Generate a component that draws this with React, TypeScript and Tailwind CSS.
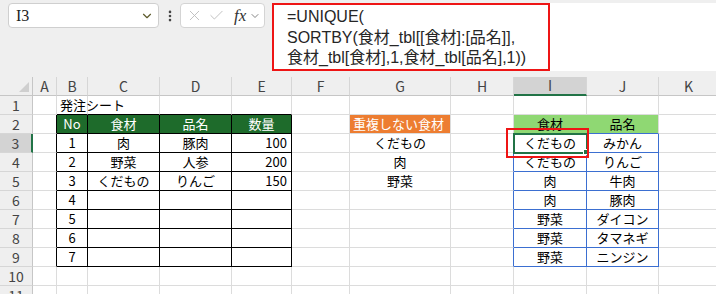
import React from 'react';
import { ChevronDown, EllipsisVertical, X, Check } from 'lucide-react';

type Cell = { t: string; a?: 'l' | 'c' | 'r'; fill?: 'dg' | 'or' | 'lg' };

const cols = [
  { k: '', w: 'w-[33px]' },
  { k: 'A', w: 'w-[24px]' },
  { k: 'B', w: 'w-[31px]' },
  { k: 'C', w: 'w-[72px]' },
  { k: 'D', w: 'w-[72px]' },
  { k: 'E', w: 'w-[60px]' },
  { k: 'F', w: 'w-[58px]' },
  { k: 'G', w: 'w-[101px]' },
  { k: 'H', w: 'w-[63px]' },
  { k: 'I', w: 'w-[73px]' },
  { k: 'J', w: 'w-[72px]' },
  { k: 'K', w: 'w-[60px]' },
];

const cells: Record<string, Cell> = {
  '1-2': { t: '発注シート', a: 'l' },
  '2-2': { t: 'No', fill: 'dg' },
  '2-3': { t: '食材', fill: 'dg' },
  '2-4': { t: '品名', fill: 'dg' },
  '2-5': { t: '数量', fill: 'dg' },
  '2-7': { t: '重複しない食材', a: 'l', fill: 'or' },
  '2-9': { t: '食材', fill: 'lg' },
  '2-10': { t: '品名', fill: 'lg' },
};

// 発注シート
const order = [
  ['肉', '豚肉', '100'],
  ['野菜', '人参', '200'],
  ['くだもの', 'りんご', '150'],
];
for (let i = 0; i < 7; i++) {
  const r = i + 3;
  cells[`${r}-2`] = { t: String(i + 1) };
  if (order[i]) {
    cells[`${r}-3`] = { t: order[i][0] };
    cells[`${r}-4`] = { t: order[i][1] };
    cells[`${r}-5`] = { t: order[i][2], a: 'r' };
  }
}
['くだもの', '肉', '野菜'].forEach((t, i) => (cells[`${i + 3}-7`] = { t }));

// スピル範囲
const spill = [
  ['くだもの', 'みかん'],
  ['くだもの', 'りんご'],
  ['肉', '牛肉'],
  ['肉', '豚肉'],
  ['野菜', 'ダイコン'],
  ['野菜', 'タマネギ'],
  ['野菜', 'ニンジン'],
];
spill.forEach(([a, b], i) => {
  cells[`${i + 3}-9`] = { t: a };
  cells[`${i + 3}-10`] = { t: b };
});

const rightCls = (r: number, c: number) => {
  if (c === 0) return r === 3 ? 'border-r-2 border-r-[#217346]' : 'border-r border-r-[#c6c6c6]';
  if (r === 0) return 'border-r border-r-[#d6d6d6]';
  if (r >= 2 && r <= 9 && c >= 1 && c <= 5) return 'border-r border-r-black';
  if (r >= 3 && r <= 9 && c >= 8 && c <= 10) return 'border-r border-r-[#3b6fd1]';
  if (r === 2 && c === 9) return 'border-r border-r-[#8fd873]';
  return 'border-r border-r-[#dcdcdc]';
};

const bottomCls = (r: number, c: number) => {
  if (r === 0) return c === 9 ? 'border-b-2 border-b-[#217346]' : 'border-b border-b-[#c6c6c6]';
  if (c === 0) return 'border-b border-b-[#d6d6d6]';
  if (r >= 1 && r <= 9 && c >= 2 && c <= 5) return 'border-b border-b-black';
  if (r >= 2 && r <= 9 && c >= 9 && c <= 10) return 'border-b border-b-[#3b6fd1]';
  return 'border-b border-b-[#dcdcdc]';
};

const fillCls = (f?: Cell['fill']) => {
  if (f === 'dg') return 'bg-[#1e6b2b] text-white';
  if (f === 'or') return 'bg-[#ed7d31] text-white';
  if (f === 'lg') return 'bg-[#8fd873] text-black';
  return 'text-black';
};

const alignCls = (a?: Cell['a']) => {
  if (a === 'l') return 'justify-start pl-[3px]';
  if (a === 'r') return 'justify-end pr-[4px]';
  return 'justify-center';
};

const FormulaBar = () => (
  <div className="h-[77px] flex items-start pt-[3px] pl-[8px]">
    <div className="w-[151px] h-[25px] bg-white border border-[#cfcfcf] rounded-[4px] flex items-center justify-between pl-[7px] pr-[4px]">
      <span className="text-[16px] text-[#222] font-['Liberation_Serif',serif]">I3</span>
      <ChevronDown size={14} strokeWidth={2} className="text-[#5e5b2c]" />
    </div>
    <div className="w-[21px] h-[25px] flex items-center justify-center">
      <EllipsisVertical size={14} strokeWidth={2.5} className="text-[#444]" />
    </div>
    <div className="w-[85px] h-[25px] bg-white border border-[#d4d4d4] rounded-[4px] flex items-center pl-[5px] gap-[3px]">
      <X size={17} strokeWidth={1.3} className="text-[#bdbdbd]" />
      <Check size={17} strokeWidth={1.3} className="text-[#bdbdbd] ml-[2px]" />
      <span className="ml-[6px] text-[17px] italic text-[#333] font-['Liberation_Serif',serif] leading-none">fx</span>
      <ChevronDown size={12} strokeWidth={1.6} className="text-[#666]" />
    </div>
    <div className="ml-[7px] flex-1 h-[68px] bg-white">
      <div className="w-[278px] h-[68px] border-2 border-[#ee1515] pl-[13px] pt-[2px] text-[16px] leading-[20.5px] text-[#262626] font-['Liberation_Sans','Noto_Sans_CJK_JP',sans-serif] whitespace-nowrap">
        <div>=UNIQUE(</div>
        <div>SORTBY(食材_tbl[[食材]:[品名]],</div>
        <div>食材_tbl[食材],1,食材_tbl[品名],1))</div>
      </div>
    </div>
  </div>
);

const Corner = () => (
  <svg width="32" height="18" className="block">
    <polygon points="29,5 29,15 19,15" fill="#cfcfcf" />
  </svg>
);

export default function App() {
  const rows = Array.from({ length: 12 }, (_, r) => r);
  return (
    <div className="w-[716px] h-[294px] overflow-hidden bg-[#efefef] font-['Noto_Sans_CJK_JP',sans-serif]">
      <FormulaBar />
      <div className="relative bg-white">
        {rows.map((r) => (
          <div key={r} className="flex h-[19px]">
            {cols.map((col, c) => {
              if (r === 0) {
                return (
                  <div
                    key={c}
                    className={`${col.w} shrink-0 h-[19px] flex items-center justify-center text-[14px] text-[#444] ${c === 9 ? 'bg-[#d3d3d3]' : 'bg-[#efefef]'} ${rightCls(r, c)} ${bottomCls(r, c)}`}
                  >
                    {c === 0 ? <Corner /> : col.k}
                  </div>
                );
              }
              if (c === 0) {
                return (
                  <div
                    key={c}
                    className={`${col.w} shrink-0 h-[19px] flex items-center justify-center text-[14px] text-[#444] ${r === 3 ? 'bg-[#d3d3d3]' : 'bg-[#efefef]'} ${rightCls(r, c)} ${bottomCls(r, c)}`}
                  >
                    {r}
                  </div>
                );
              }
              const cell = cells[`${r}-${c}`];
              return (
                <div
                  key={c}
                  className={`${col.w} shrink-0 h-[19px] flex items-center text-[13px] leading-[18px] whitespace-nowrap ${fillCls(cell?.fill)} ${alignCls(cell?.a)} ${rightCls(r, c)} ${bottomCls(r, c)}`}
                >
                  {cell?.t}
                </div>
              );
            })}
          </div>
        ))}

        {/* 選択セル I3 */}
        <div className="absolute left-[513px] top-[56px] w-[75px] h-[21px] border-2 border-[#217346]" />
        <div className="absolute left-[583px] top-[72px] w-[6px] h-[6px] bg-[#217346] border border-white" />
        {/* 赤枠 */}
        <div className="absolute left-[506px] top-[51px] w-[83px] h-[30px] border-2 border-[#ee1515]" />
      </div>
    </div>
  );
}
